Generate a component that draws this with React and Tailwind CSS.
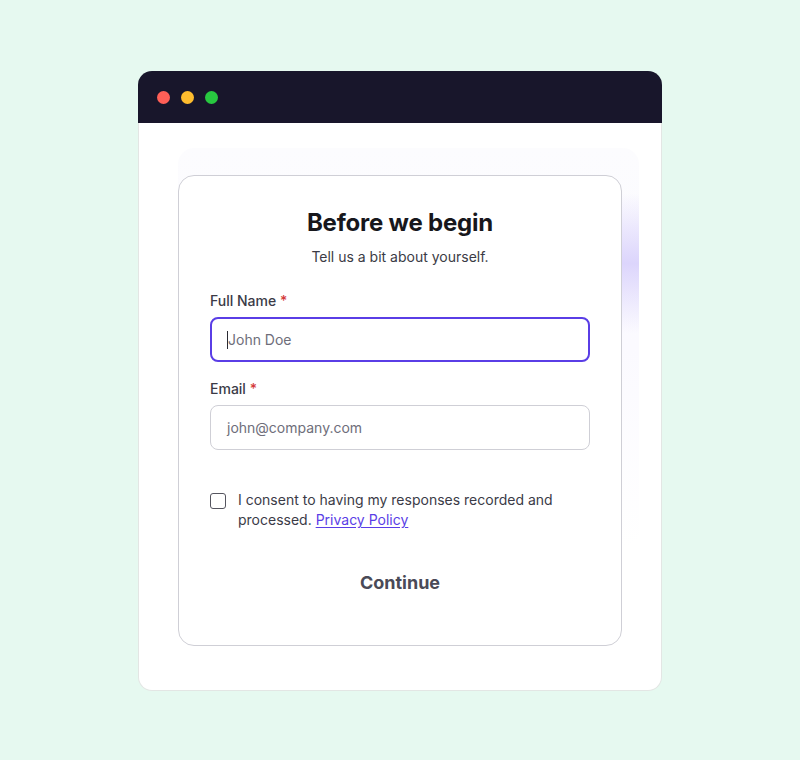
import React from "react";

export default function App() {
  return (
    <div
      className="min-h-[760px] w-full bg-[#e6f9f0] flex justify-center pt-[71px]"
      style={{ fontFamily: "Inter, 'Noto Sans', sans-serif" }}
    >
      <div className="w-[524px] h-[618px] flex flex-col">
        {/* title bar */}
        <div className="h-[52px] bg-[#18162b] rounded-t-[14px] flex items-center gap-[11px] pl-[19px] shrink-0">
          <span className="w-[13px] h-[13px] rounded-full bg-[#ff5f57]" />
          <span className="w-[13px] h-[13px] rounded-full bg-[#febc2e]" />
          <span className="w-[13px] h-[13px] rounded-full bg-[#28c840]" />
        </div>

        {/* content */}
        <div className="relative flex-1 bg-white border-x border-b border-[#e3e6e4] rounded-b-[14px] px-[39px] pt-[52px] pb-[44px]">
          {/* soft decorative backdrop */}
          <div className="absolute left-[39px] top-[25px] w-[461px] h-[400px] bg-gradient-to-b from-[#fcfcfe] via-[#fbfaff] to-white/0 rounded-[16px]" />
          <div className="absolute left-[482px] top-[70px] w-[18px] h-[140px] bg-gradient-to-b from-white/0 via-[#dcd5fc] to-white/0" />

          <div className="relative bg-white border border-[#cfcfd6] rounded-[16px] px-[31px] pt-[31px] pb-[48px] flex flex-col">
            <h1 className="text-center text-[24px] leading-8 font-bold text-[#17171c] tracking-[-0.2px]">
              Before we begin
            </h1>
            <p className="text-center text-sm leading-5 text-[#3b3b45] mt-2">
              Tell us a bit about yourself.
            </p>

            <label className="mt-6 text-sm leading-5 font-medium text-[#3b3b47]">
              Full Name <span className="text-[#d43a3a]">*</span>
            </label>
            <div className="mt-[6px] h-[45px] rounded-[8px] border-2 border-[#5a3ee6] flex items-center pl-[15px]">
              <span className="w-px h-[18px] bg-[#2a2a33]" />
              <span className="text-[14px] text-[#6e6e7a]">John Doe</span>
            </div>

            <label className="mt-[17px] text-sm leading-5 font-medium text-[#3b3b47]">
              Email <span className="text-[#d43a3a]">*</span>
            </label>
            <div className="mt-[6px] h-[45px] rounded-[8px] border border-[#cfcfd6] flex items-center pl-4">
              <span className="text-[14px] text-[#6e6e7a]">john@company.com</span>
            </div>

            <div className="mt-10 flex items-start gap-3">
              <span className="mt-[3px] w-4 h-4 shrink-0 rounded-[3px] border-[1.5px] border-[#55555f] bg-white" />
              <p className="text-sm leading-5 text-[#3b3b47]">
                I consent to having my responses recorded and processed.{" "}
                <span className="text-[#5a3ee6] underline underline-offset-2">Privacy Policy</span>
              </p>
            </div>

            <div className="mt-[39px] text-center text-[18px] leading-7 font-bold text-[#4a4a57]">
              Continue
            </div>
          </div>
        </div>
      </div>
    </div>
  );
}
